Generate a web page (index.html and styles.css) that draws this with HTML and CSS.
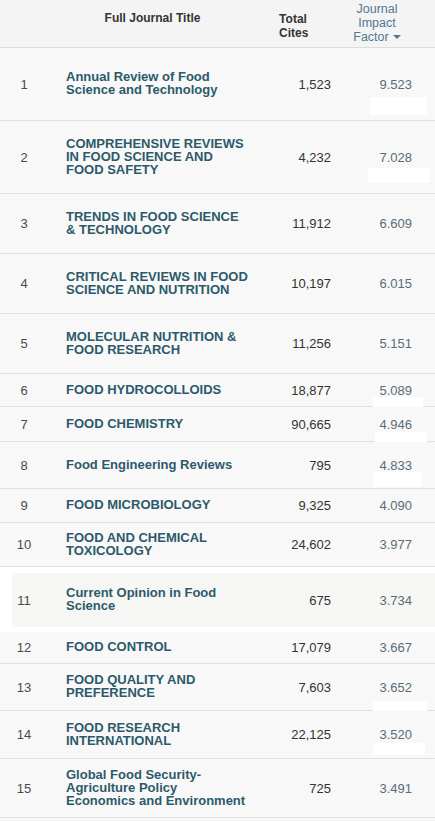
FILE: index.html
```html
<!DOCTYPE html>
<html lang="en">
<head>
<meta charset="utf-8">
<title>Journal Impact Factor</title>
<link rel="stylesheet" href="styles.css">
</head>
<body>
<div class="table">
  <div class="head">
    <div class="hc h-rank"></div>
    <div class="hc h-title">Full Journal Title</div>
    <div class="hc h-cites">Total<br>Cites</div>
    <div class="hc h-if">Journal<br>Impact<br>Factor<span class="caret"></span></div>
  </div>

  <div class="row h72"><div class="rank">1</div><div class="title">Annual Review of Food<br>Science and Technology</div><div class="cites">1,523</div><div class="jif">9.523</div><span class="patch p1"></span></div>
  <div class="row h72"><div class="rank">2</div><div class="title">COMPREHENSIVE REVIEWS<br>IN FOOD SCIENCE AND<br>FOOD SAFETY</div><div class="cites">4,232</div><div class="jif">7.028</div><span class="patch p2"></span></div>
  <div class="row h59"><div class="rank">3</div><div class="title">TRENDS IN FOOD SCIENCE<br>&amp; TECHNOLOGY</div><div class="cites">11,912</div><div class="jif">6.609</div></div>
  <div class="row h59"><div class="rank">4</div><div class="title">CRITICAL REVIEWS IN FOOD<br>SCIENCE AND NUTRITION</div><div class="cites">10,197</div><div class="jif">6.015</div></div>
  <div class="row h59"><div class="rank">5</div><div class="title">MOLECULAR NUTRITION &amp;<br>FOOD RESEARCH</div><div class="cites">11,256</div><div class="jif">5.151</div></div>
  <div class="row h32"><div class="rank">6</div><div class="title">FOOD HYDROCOLLOIDS</div><div class="cites">18,877</div><div class="jif">5.089</div><span class="patch p6"></span></div>
  <div class="row h34"><div class="rank">7</div><div class="title">FOOD CHEMISTRY</div><div class="cites">90,665</div><div class="jif">4.946</div><span class="patch p7"></span></div>
  <div class="row h46"><div class="rank">8</div><div class="title">Food Engineering Reviews</div><div class="cites">795</div><div class="jif">4.833</div><span class="patch p8"></span></div>
  <div class="row h33"><div class="rank">9</div><div class="title">FOOD MICROBIOLOGY</div><div class="cites">9,325</div><div class="jif">4.090</div></div>
  <div class="row h43"><div class="rank">10</div><div class="title">FOOD AND CHEMICAL<br>TOXICOLOGY</div><div class="cites">24,602</div><div class="jif">3.977</div></div>
  <div class="frame">
    <div class="row framed h54"><div class="rank">11</div><div class="title">Current Opinion in Food<br>Science</div><div class="cites">675</div><div class="jif">3.734</div></div>
  </div>
  <div class="row h31"><div class="rank">12</div><div class="title">FOOD CONTROL</div><div class="cites">17,079</div><div class="jif">3.667</div></div>
  <div class="row h46"><div class="rank">13</div><div class="title">FOOD QUALITY AND<br>PREFERENCE</div><div class="cites">7,603</div><div class="jif">3.652</div><span class="patch p13"></span></div>
  <div class="row h47"><div class="rank">14</div><div class="title">FOOD RESEARCH<br>INTERNATIONAL</div><div class="cites">22,125</div><div class="jif">3.520</div><span class="patch p14"></span></div>
  <div class="row h58"><div class="rank">15</div><div class="title">Global Food Security-<br>Agriculture Policy<br>Economics and Environment</div><div class="cites">725</div><div class="jif">3.491</div></div>
</div>
</body>
</html>
```

FILE: styles.css
```css
* { box-sizing: border-box; }

html, body {
  margin: 0;
  padding: 0;
  background: #f8f8f8;
  font-family: "Liberation Sans", Arial, sans-serif;
}

.table {
  width: 435px;
}

.head {
  display: grid;
  grid-template-columns: 48px 231px 60px 96px;
  height: 48px;
  background: #f4f4f4;
  border-bottom: 1px solid #dcdcdc;
}

.hc {
  font-size: 12px;
  line-height: 14px;
  font-weight: bold;
  color: #333;
  text-align: center;
}

.h-title { padding: 11px 22px 0 0; }
.h-cites { padding: 12px 32px 0 0; }
.h-if {
  padding: 2px 20px 0 0;
  font-weight: normal;
  font-size: 12.5px;
  color: #56768f;
}

.caret {
  display: inline-block;
  width: 0;
  height: 0;
  margin-left: 4px;
  vertical-align: 2px;
  border-left: 4px solid transparent;
  border-right: 4px solid transparent;
  border-top: 4px solid #56768f;
}

.row {
  position: relative;
  display: grid;
  grid-template-columns: 48px 231px 60px 96px;
  align-items: center;
  background: #f8f8f8;
  border-bottom: 1px solid #e1e1e1;
  font-size: 13px;
}

.h31 { height: 32px; }
.h32 { height: 33px; }
.h33 { height: 34px; }
.h34 { height: 35px; }
.h43 { height: 44px; }
.h46 { height: 47px; }
.h47 { height: 48px; }
.h54 { height: 54px; }
.h58 { height: 59px; }
.h59 { height: 60px; }
.h72 { height: 73px; }

.rank {
  text-align: center;
  color: #4a4a4a;
}

.title {
  padding: 0 0 2px 18px;
  font-weight: bold;
  line-height: 13px;
  color: #2c5a6a;
  white-space: nowrap;
}

.cites {
  text-align: right;
  padding-right: 8px;
  color: #333;
}

.jif {
  text-align: right;
  padding-right: 23px;
  color: #5a6c77;
}

.frame {
  background: #ffffff;
  padding: 6px 0 5px 0;
}

.row.framed {
  border-bottom: none;
  background: linear-gradient(to right, #ffffff 12px, #f6f6f4 12px);
}

.patch {
  position: absolute;
  background: #ffffff;
}
.p1  { left: 370px; top: 49px; width: 57px; height: 18px; }
.p2  { left: 368px; top: 47px; width: 62px; height: 15px; }
.p6  { left: 373px; top: 23px; width: 50px; height: 10px; }
.p7  { left: 375px; top: 25px; width: 52px; height: 10px; }
.p8  { left: 373px; top: 30px; width: 49px; height: 15px; }
.p13 { left: 373px; top: 37px; width: 54px; height: 10px; }
.p14 { left: 373px; top: 32px; width: 52px; height: 12px; }
```
